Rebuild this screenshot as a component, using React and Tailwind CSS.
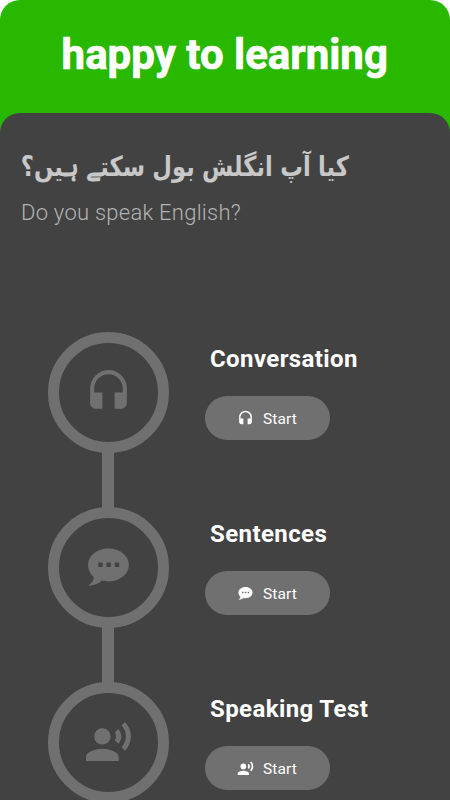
import React from "react";
import { MdHeadset, MdRecordVoiceOver } from "react-icons/md";

const ChatBubble = ({ className }) => (
  <svg viewBox="0 0 48 48" fill="currentColor" className={className}>
    <path
      fillRule="evenodd"
      d="M24 5.500C12.900 5.500 4 12.700 4 21.500c0 4.800 2.200 9 5.600 12C9.600 36.800 6.900 39.900 4 41.800c5.900.1 11-2.400 13.500-5 2.100.5 4.200.8 6.500.8 11.100 0 20-7.300 20-16.100S35.100 5.500 24 5.500zM14 19.200h4.300v4.300H14zM22 19.200h4.300v4.300H22zM30.200 19.200h4.300v4.300h-4.300z"
    />
  </svg>
);

const lessons = [
  { title: "Conversation", Icon: MdHeadset },
  { title: "Sentences", Icon: ChatBubble },
  { title: "Speaking Test", Icon: MdRecordVoiceOver },
];

const Lesson = ({ title, Icon, last }) => (
  <div className="flex h-[175px] shrink-0">
    <div className="ml-12 flex w-[120.5px] flex-col items-center">
      <div className="flex h-[120.5px] w-[120.5px] shrink-0 items-center justify-center rounded-full border-[11px] border-[#707070] text-[#707070]">
        <Icon className="h-[49px] w-[49px]" />
      </div>
      {!last && <div className="-my-px h-[57px] w-3 shrink-0 bg-[#707070]" />}
    </div>
    <div className="ml-9 pt-[10.5px]">
      <h2 className="ml-[5.5px] whitespace-nowrap text-[24px] font-bold leading-8 tracking-[0.4px] text-white">{title}</h2>
      <button className="mt-[21.5px] flex h-11 w-[125px] items-center justify-center gap-[9px] rounded-full bg-[#707070] text-white">
        <Icon className="h-[17px] w-[17px]" />
        <span className="pt-px text-[15.5px] leading-6 tracking-[0.1px]">Start</span>
      </button>
    </div>
  </div>
);

const App = () => {
  return (
    <div className="h-[800px] w-[450px] overflow-hidden bg-white font-['Roboto',sans-serif]">
      <div className="flex h-full w-[449.5px] flex-col rounded-t-[20px] bg-[#28b800]">
        <header className="flex h-[112.5px] shrink-0 items-center justify-center pb-[3px]">
          <h1 className="whitespace-nowrap text-[42px] font-bold text-white [-webkit-text-stroke:0.7px_white]">happy to learning</h1>
        </header>
        <main className="flex min-h-0 flex-1 flex-col overflow-hidden rounded-t-[20px] bg-[#424242]">
          <div className="h-[219.5px] shrink-0 pl-[21px] pt-[31px]">
            <p
              dir="rtl"
              className="w-[328px] origin-right scale-x-[0.915] whitespace-nowrap font-['DejaVu_Sans',sans-serif] text-[27.5px] font-bold leading-[44px] text-[#c8c8c8] [font-stretch:condensed] [word-spacing:-0.5px]">
              کیا آپ انگلش بول سکتے ہیں؟
            </p>
            <p className="mt-[9px] text-[22px] font-light leading-8 tracking-[0.25px] text-[#b3b3b3]">Do you speak English?</p>
          </div>
          {lessons.map((lesson, index) => (
            <Lesson key={lesson.title} {...lesson} last={index === lessons.length - 1} />
          ))}
        </main>
      </div>
    </div>
  );
};

export default App;
